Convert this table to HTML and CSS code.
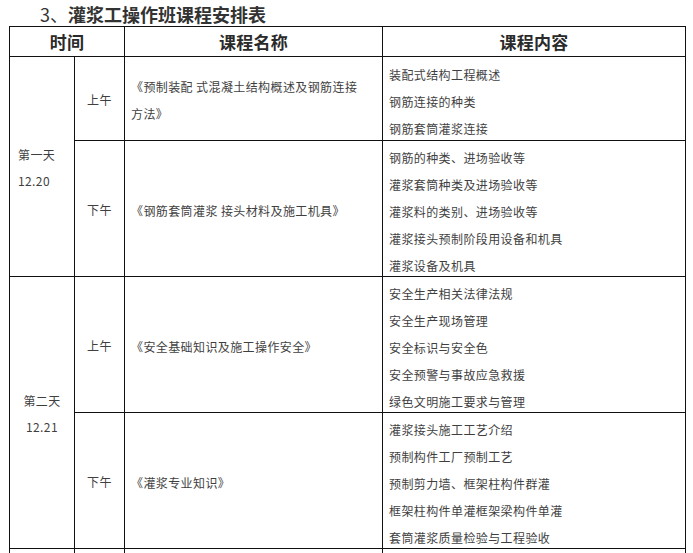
FILE: index.html
```html
<!DOCTYPE html>
<html lang="zh">
<head>
<meta charset="utf-8">
<link rel="stylesheet" href="styles.css">
</head>
<body>
<h3 class="title"><span class="num">3、</span>灌浆工操作班课程安排表</h3>
<table class="schedule">
  <colgroup>
    <col class="c-day">
    <col class="c-half">
    <col class="c-name">
    <col class="c-content">
  </colgroup>
  <tr class="head">
    <th colspan="2">时间</th>
    <th>课程名称</th>
    <th>课程内容</th>
  </tr>
  <tr class="short">
    <td rowspan="2" class="day day-left"><div>第一天</div><div>12.20</div></td>
    <td class="half">上午</td>
    <td class="name"><p>《预制装配 式混凝土结构概述及钢筋连接方法》</p></td>
    <td class="content">
      <p>装配式结构工程概述</p>
      <p>钢筋连接的种类</p>
      <p>钢筋套筒灌浆连接</p>
    </td>
  </tr>
  <tr class="tall">
    <td class="half">下午</td>
    <td class="name"><p>《钢筋套筒灌浆 接头材料及施工机具》</p></td>
    <td class="content">
      <p>钢筋的种类、进场验收等</p>
      <p>灌浆套筒种类及进场验收等</p>
      <p>灌浆料的类别、进场验收等</p>
      <p>灌浆接头预制阶段用设备和机具</p>
      <p>灌浆设备及机具</p>
    </td>
  </tr>
  <tr class="tall">
    <td rowspan="2" class="day day-center"><div>第二天</div><div>12.21</div></td>
    <td class="half">上午</td>
    <td class="name"><p>《安全基础知识及施工操作安全》</p></td>
    <td class="content">
      <p>安全生产相关法律法规</p>
      <p>安全生产现场管理</p>
      <p>安全标识与安全色</p>
      <p>安全预警与事故应急救援</p>
      <p>绿色文明施工要求与管理</p>
    </td>
  </tr>
  <tr class="tall">
    <td class="half">下午</td>
    <td class="name"><p>《灌浆专业知识》</p></td>
    <td class="content">
      <p>灌浆接头施工工艺介绍</p>
      <p>预制构件工厂预制工艺</p>
      <p>预制剪力墙、框架柱构件群灌</p>
      <p>框架柱构件单灌框架梁构件单灌</p>
      <p>套筒灌浆质量检验与工程验收</p>
    </td>
  </tr>
  <tr class="more">
    <td></td><td></td><td></td><td></td>
  </tr>
</table>
</body>
</html>
```
FILE: styles.css
```css
html, body {
  margin: 0;
  padding: 0;
  background: #fff;
}
body {
  font-family: "Noto Sans CJK SC", "Noto Sans", sans-serif;
  color: #3f3f3f;
}
.title {
  margin: 2px 0 0 0;
  padding-left: 40px;
  height: 24px;
  line-height: 24px;
  font-size: 18px;
  font-weight: bold;
  color: #333;
}
.title .num {
  font-weight: normal;
}
.schedule {
  margin-left: 9px;
  width: 676px;
  border-collapse: collapse;
  table-layout: fixed;
  font-size: 12px;
  letter-spacing: 0.4px;
}
.c-day { width: 65px; }
.c-half { width: 50px; }
.c-name { width: 258px; }
.c-content { width: 303px; }
.schedule th,
.schedule td {
  border: 1px solid #111;
  padding: 0;
  vertical-align: middle;
}
.schedule p {
  margin: 0;
  line-height: 27px;
}
.head { height: 30px; }
.head th {
  font-size: 17px;
  font-weight: bold;
  color: #2a2a2a;
  text-align: center;
  letter-spacing: 0.2px;
}
.short { height: 84px; }
.tall { height: 136px; }
.more { height: 30px; }
.day div {
  line-height: 26px;
}
.schedule td.day-left {
  padding: 3px 0 0 8px;
  text-align: left;
}
.schedule td.day-center {
  padding-top: 3px;
  text-align: center;
}
.schedule td.half {
  padding-top: 2px;
  text-align: center;
}
.schedule td.name {
  padding: 3px 14px 0 6px;
}
.schedule td.content {
  padding: 3px 6px 0 6px;
}
.schedule td.content p:last-child {
  margin-bottom: -3px;
}
```
